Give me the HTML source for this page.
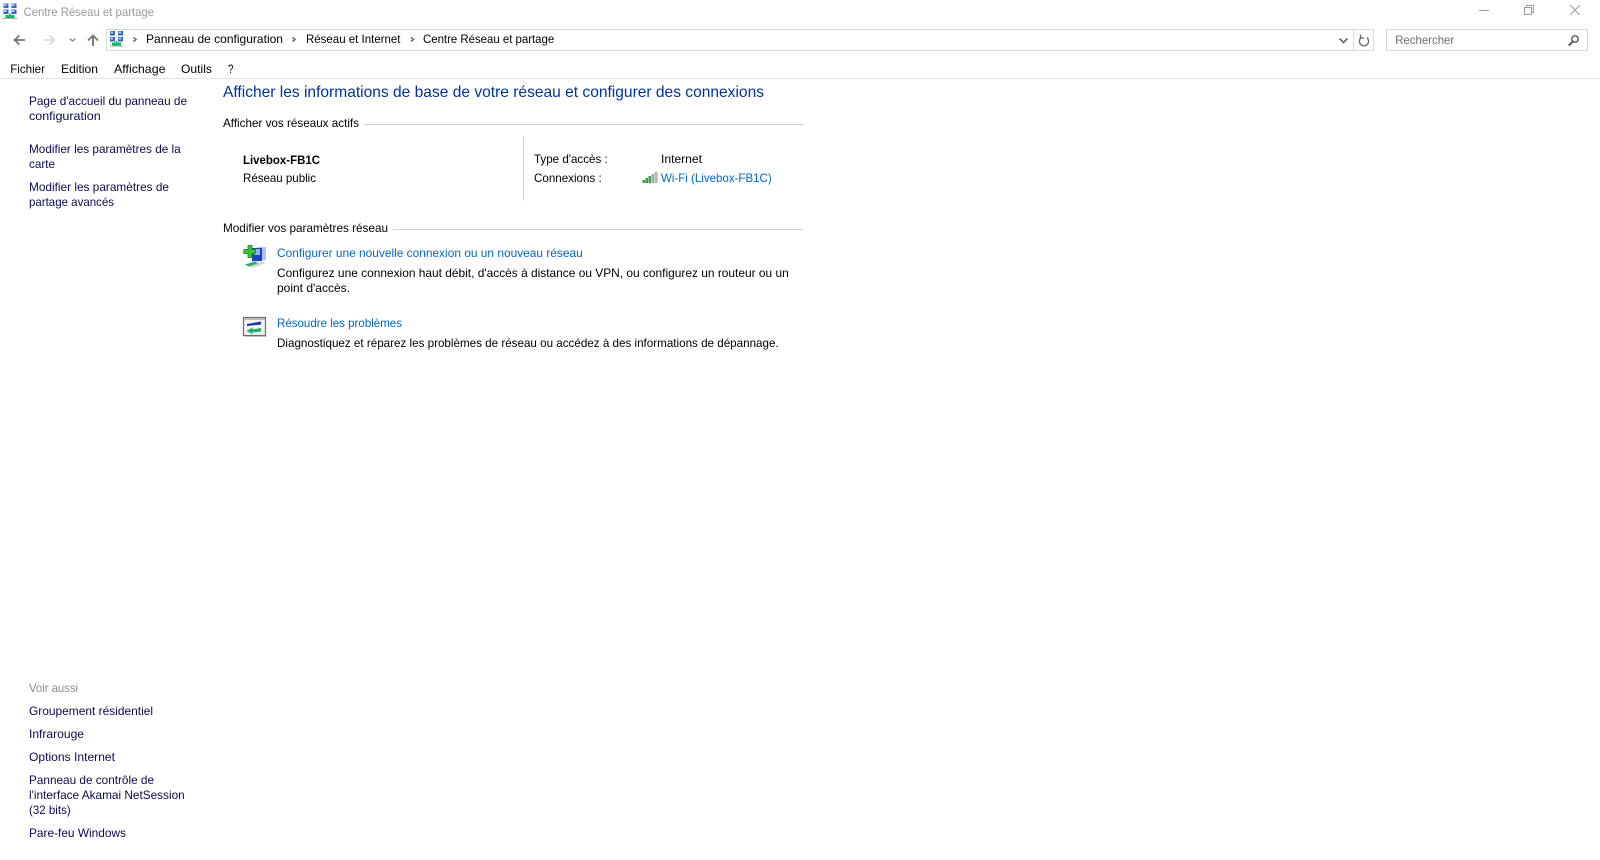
<!DOCTYPE html>
<html lang="fr">
<head>
<meta charset="utf-8">
<title>Centre Réseau et partage</title>
<style>
html,body{margin:0;padding:0;background:#fff;width:1600px;height:860px;overflow:hidden}
svg{display:block}
text{font-family:"Liberation Sans",sans-serif;font-size:12px;fill:#000}
.l{fill:#0a0a50}
.b{fill:#0066cc}
.g{fill:#8a8a8a}
</style>
</head>
<body>
<svg width="1600" height="860" viewBox="0 0 1600 860" xmlns="http://www.w3.org/2000/svg">
<defs>
<g id="net">
<rect x="0.5" y="0" width="5" height="4.5" fill="#3a62c8"/><rect x="1" y="0.5" width="2.5" height="2" fill="#a9ccf2"/>
<rect x="8.5" y="0" width="5" height="4.5" fill="#3a62c8"/><rect x="9" y="0.5" width="2.5" height="2" fill="#a9ccf2"/>
<rect x="0.5" y="6" width="5" height="4.5" fill="#3a62c8"/><rect x="1" y="6.5" width="2.5" height="2" fill="#a9ccf2"/>
<rect x="8.5" y="6" width="5" height="4.5" fill="#3a62c8"/><rect x="9" y="6.5" width="2.5" height="2" fill="#a9ccf2"/>
<rect x="6.2" y="10" width="1.6" height="2" fill="#1f9e55"/>
<rect x="2.5" y="11.5" width="9" height="3" fill="#16b860"/>
<rect x="0" y="14.5" width="14" height="1" fill="#a8a8a8"/>
</g>
</defs>

<!-- title bar -->
<use href="#net" x="3" y="3.5"/>
<text x="23.5" y="16" textLength="130.5" lengthAdjust="spacingAndGlyphs" style="fill:#999">Centre Réseau et partage</text>
<rect x="1479" y="10" width="10" height="1" fill="#9a9a9a"/>
<path d="M1526.5 7.5V5.5H1533.5V12.5H1531.5M1524.5 7.5H1531.5V14.5H1524.5Z" fill="none" stroke="#9a9a9a"/>
<path d="M1570 5L1580 15M1580 5L1570 15" fill="none" stroke="#9a9a9a"/>

<!-- nav -->
<path d="M25 40H15M19.5 35.5L14.5 40L19.5 44.5" fill="none" stroke="#777" stroke-width="1.8"/>
<path d="M44 40H54M49.5 35.5L54.5 40L49.5 44.5" fill="none" stroke="#dcdcdc" stroke-width="1.8"/>
<path d="M69.5 38.5L72.5 41L75.5 38.5" fill="none" stroke="#8a8a8a" stroke-width="1.4"/>
<path d="M93 46V36M88 40.5L93 35.5L98 40.5" fill="none" stroke="#777" stroke-width="1.9"/>

<!-- address bar -->
<rect x="106.5" y="29.5" width="1267" height="21" fill="#fff" stroke="#d9d9d9"/>
<rect x="1353" y="30" width="1" height="20" fill="#d9d9d9"/>
<use href="#net" x="109.5" y="31"/>
<path d="M133.5 37.5L136 39.5L133.5 41.5M292.5 37.5L295 39.5L292.5 41.5M411 37.5L413.5 39.5L411 41.5" fill="none" stroke="#666" stroke-width="1.5"/>
<text x="146" y="43" textLength="137" lengthAdjust="spacingAndGlyphs">Panneau de configuration</text>
<text x="306" y="43" textLength="94.5" lengthAdjust="spacingAndGlyphs">Réseau et Internet</text>
<text x="423" y="43" textLength="131.2" lengthAdjust="spacingAndGlyphs">Centre Réseau et partage</text>
<path d="M1339.5 38.5L1343.5 42.5L1347.5 38.5" fill="none" stroke="#666" stroke-width="1.6"/>
<path d="M1361.2 37.6A4.6 4.6 0 1 0 1366.8 37.6M1360.5 34.5V38H1364" fill="none" stroke="#666" stroke-width="1.3"/>

<!-- search -->
<rect x="1386.5" y="29.5" width="201" height="21" fill="#fff" stroke="#d9d9d9"/>
<text x="1395.2" y="44" textLength="59" lengthAdjust="spacingAndGlyphs" style="fill:#6d6d6d">Rechercher</text>
<circle cx="1575" cy="39" r="3.2" fill="none" stroke="#555" stroke-width="1.4"/>
<path d="M1572.6 41.6L1568.8 45.6" stroke="#555" stroke-width="1.9" fill="none"/>

<!-- menu -->
<text x="10.2" y="73" textLength="34.8" lengthAdjust="spacingAndGlyphs">Fichier</text>
<text x="61" y="73" textLength="37" lengthAdjust="spacingAndGlyphs">Edition</text>
<text x="114" y="73" textLength="51.5" lengthAdjust="spacingAndGlyphs">Affichage</text>
<text x="181" y="73" textLength="31" lengthAdjust="spacingAndGlyphs">Outils</text>
<text x="228" y="73" textLength="5.5" lengthAdjust="spacingAndGlyphs">?</text>
<rect x="0" y="78" width="1600" height="1" fill="#e3e3e3"/>

<!-- sidebar -->
<text class="l" x="29" y="105" textLength="158" lengthAdjust="spacingAndGlyphs">Page d'accueil du panneau de</text>
<text class="l" x="29" y="120" textLength="71.7" lengthAdjust="spacingAndGlyphs">configuration</text>
<text class="l" x="29" y="153" textLength="151.7" lengthAdjust="spacingAndGlyphs">Modifier les paramètres de la</text>
<text class="l" x="29" y="168" textLength="26" lengthAdjust="spacingAndGlyphs">carte</text>
<text class="l" x="29" y="191" textLength="140" lengthAdjust="spacingAndGlyphs">Modifier les paramètres de</text>
<text class="l" x="29" y="206" textLength="85" lengthAdjust="spacingAndGlyphs">partage avancés</text>

<text class="g" x="29" y="692" textLength="49" lengthAdjust="spacingAndGlyphs">Voir aussi</text>
<text class="l" x="29" y="715" textLength="124" lengthAdjust="spacingAndGlyphs">Groupement résidentiel</text>
<text class="l" x="29" y="738" textLength="55" lengthAdjust="spacingAndGlyphs">Infrarouge</text>
<text class="l" x="29" y="761" textLength="86" lengthAdjust="spacingAndGlyphs">Options Internet</text>
<text class="l" x="29" y="784" textLength="125" lengthAdjust="spacingAndGlyphs">Panneau de contrôle de</text>
<text class="l" x="29" y="799" textLength="155.7" lengthAdjust="spacingAndGlyphs">l'interface Akamai NetSession</text>
<text class="l" x="29" y="814" textLength="41.7" lengthAdjust="spacingAndGlyphs">(32 bits)</text>
<text class="l" x="29" y="837" textLength="97" lengthAdjust="spacingAndGlyphs">Pare-feu Windows</text>

<!-- main -->
<text x="223" y="97" textLength="541" lengthAdjust="spacingAndGlyphs" style="font-size:16px;fill:#003399">Afficher les informations de base de votre réseau et configurer des connexions</text>
<text x="223" y="127" textLength="136" lengthAdjust="spacingAndGlyphs">Afficher vos réseaux actifs</text>
<rect x="364" y="124" width="439" height="1" fill="#cfcfcf"/>

<text x="243" y="164" textLength="77" lengthAdjust="spacingAndGlyphs" style="font-weight:bold">Livebox-FB1C</text>
<text x="243" y="182" textLength="73" lengthAdjust="spacingAndGlyphs">Réseau public</text>
<rect x="523" y="137" width="1" height="64" fill="#d0d0d0"/>
<text x="534" y="163" textLength="73.7" lengthAdjust="spacingAndGlyphs">Type d'accès :</text>
<text x="534" y="182" textLength="67.7" lengthAdjust="spacingAndGlyphs">Connexions :</text>
<text x="661" y="163" textLength="41" lengthAdjust="spacingAndGlyphs">Internet</text>
<text class="b" x="661" y="182" textLength="110.7" lengthAdjust="spacingAndGlyphs">Wi-Fi (Livebox-FB1C)</text>
<!-- wifi bars -->
<rect x="642.5" y="180" width="2.5" height="3" fill="#3d9a4f"/>
<rect x="645.5" y="178" width="2.5" height="5" fill="#3d9a4f"/>
<rect x="648.5" y="176" width="2.5" height="7" fill="#3d9a4f"/>
<rect x="651.5" y="174" width="2.5" height="9" fill="#a8a8a8"/>
<rect x="654.5" y="172" width="3" height="11" fill="#b4b4b4"/>

<text x="223" y="232" textLength="165" lengthAdjust="spacingAndGlyphs">Modifier vos paramètres réseau</text>
<rect x="393" y="229" width="410" height="1" fill="#cfcfcf"/>

<!-- config icon -->
<rect x="257" y="247" width="9" height="13" fill="#a9c6ea"/>
<rect x="252" y="248" width="10" height="13" fill="#1c3fc4"/>
<rect x="254" y="249" width="6" height="6" fill="#8fb7ee"/>
<path d="M248 245.5H252V249.5H255.5V253.5H252V257.5H248V253.5H243.8V249.5H248Z" fill="#3ec23a" stroke="#1d7a1d" stroke-width="0.8"/>
<path d="M243.5 264.5L255 261L266 263L252 268Z" fill="#d2d2d2"/>
<path d="M246 264.5L255 261.5L257.5 263.5L248 266.5Z" fill="#18b060"/>
<text class="b" x="277" y="257" textLength="305.7" lengthAdjust="spacingAndGlyphs">Configurer une nouvelle connexion ou un nouveau réseau</text>
<text x="277" y="277" textLength="511.7" lengthAdjust="spacingAndGlyphs">Configurez une connexion haut débit, d'accès à distance ou VPN, ou configurez un routeur ou un</text>
<text x="277" y="292" textLength="73" lengthAdjust="spacingAndGlyphs">point d'accès.</text>

<!-- troubleshoot icon -->
<rect x="243.5" y="317.5" width="22" height="18" fill="#f2f2f2" stroke="#6f6f6f" stroke-width="1.2"/>
<rect x="244" y="318" width="21" height="2" fill="#bdbdbd"/>
<rect x="244" y="336" width="22.5" height="1" fill="#c4c4c4"/>
<path d="M247 324L261 321.5V324.5L247 326Z" fill="#1c35b8"/>
<path d="M246.5 331L252.5 327.5V329.5L261 328V331.5L252.5 332.5V334Z" fill="#20b060"/>
<text class="b" x="277" y="327" textLength="125" lengthAdjust="spacingAndGlyphs">Résoudre les problèmes</text>
<text x="277" y="347" textLength="501.7" lengthAdjust="spacingAndGlyphs">Diagnostiquez et réparez les problèmes de réseau ou accédez à des informations de dépannage.</text>
</svg>
</body>
</html>
